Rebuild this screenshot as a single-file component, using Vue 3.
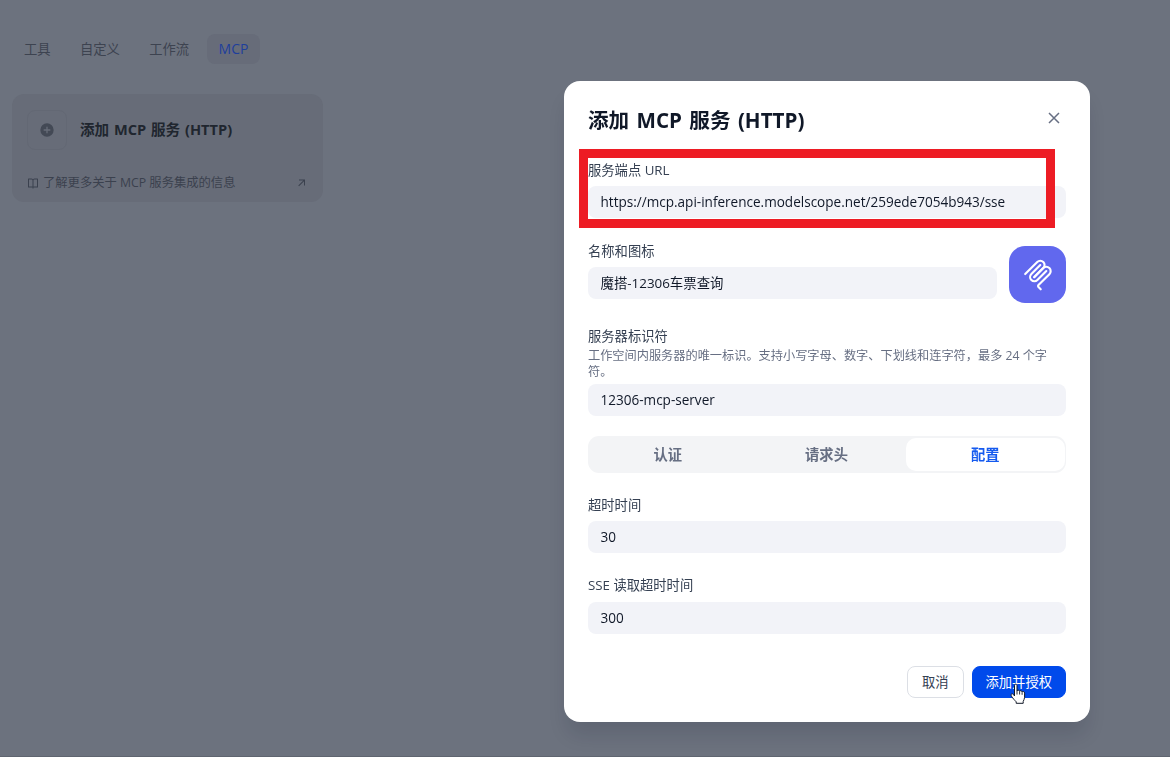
<template>
  <div class="page">
    <nav class="nav">
      <span v-for="item in navItems" :key="item" class="nav-item" :class="{ active: item === 'MCP' }">{{ item }}</span>
    </nav>

    <div class="card">
      <div class="card-head">
        <div class="card-icon">
          <svg viewBox="0 0 24 24" width="16" height="16">
            <path fill="currentColor" fill-rule="evenodd" d="M12 2a10 10 0 1 0 0 20 10 10 0 0 0 0-20Zm-1 9V7h2v4h4v2h-4v4h-2v-4H7v-2h4Z" />
          </svg>
        </div>
        <h3 class="card-title">添加 MCP 服务 (HTTP)</h3>
      </div>
      <div class="card-foot">
        <svg viewBox="0 0 24 24" width="12" height="12">
          <path fill="currentColor" d="M13 21v2h-2v-2H3a1 1 0 0 1-1-1V4a1 1 0 0 1 1-1h6c1.200 0 2.270.530 3 1.360A4 4 0 0 1 15 3h6a1 1 0 0 1 1 1v16a1 1 0 0 1-1 1h-8Zm7-2V5h-5a2 2 0 0 0-2 2v12h7Zm-9 0V7a2 2 0 0 0-2-2H4v14h7Z" />
        </svg>
        <span class="card-link">了解更多关于 MCP 服务集成的信息</span>
        <svg class="arrow" viewBox="0 0 24 24" width="12" height="12">
          <path fill="currentColor" d="M16 8.400 6 18.400 4.600 17 14.600 7H6V5h12v12h-2V8.400Z" />
        </svg>
      </div>
    </div>
  </div>

  <div class="overlay">
    <div class="modal">
      <header class="modal-header">
        <h2 class="modal-title">添加 MCP 服务 (HTTP)</h2>
        <button class="close-btn">
          <svg viewBox="0 0 12 12" width="12" height="12">
            <path d="M1 1l10 10M11 1L1 11" fill="none" stroke="currentColor" stroke-width="1.500" />
          </svg>
        </button>
      </header>

      <div class="field">
        <label class="label">服务端点 URL</label>
        <input v-model="form.url" class="input" />
      </div>

      <div class="name-row">
        <div class="field">
          <label class="label">名称和图标</label>
          <input v-model="form.name" class="input name" />
        </div>
        <div class="app-icon">
          <svg viewBox="0 0 180 180" width="32" height="32" fill="none" stroke="#fff" stroke-width="12" stroke-linecap="round">
            <path d="M18 84.853L85.882 16.971C95.255 7.598 110.451 7.598 119.823 16.971C129.196 26.343 129.196 41.539 119.823 50.912L68.558 102.177" />
            <path d="M69.265 101.470L119.823 50.912C129.196 41.539 144.392 41.539 153.765 50.912L154.118 51.265C163.491 60.638 163.491 75.834 154.118 85.206L92.725 146.600C89.601 149.724 89.601 154.789 92.725 157.913L105.331 170.520" />
            <path d="M102.853 33.941L52.648 84.146C43.276 93.518 43.276 108.714 52.648 118.087C62.021 127.459 77.217 127.459 86.589 118.087L136.794 67.882" />
          </svg>
        </div>
      </div>

      <div class="field server">
        <label class="label">服务器标识符</label>
        <p class="hint">工作空间内服务器的唯一标识。支持小写字母、数字、下划线和连字符，最多 24 个字符。</p>
        <input v-model="form.server" class="input" />
      </div>

      <div class="tabs">
        <button v-for="t in tabs" :key="t" class="tab" :class="{ active: t === tab }" @click="tab = t">{{ t }}</button>
      </div>

      <div class="field timeout">
        <label class="label">超时时间</label>
        <input v-model="form.timeout" class="input" />
      </div>

      <div class="field read-timeout">
        <label class="label">SSE 读取超时时间</label>
        <input v-model="form.readTimeout" class="input" />
      </div>

      <footer class="modal-footer">
        <button class="btn">取消</button>
        <button class="btn primary">添加并授权</button>
      </footer>

      <div class="highlight"></div>
      <svg class="cursor" viewBox="0 0 18 22" width="18" height="22">
        <path d="M5.500 13V2.700C5.500 .6 8 .6 8 2.700V8c.3-1.200 2.400-1.100 2.600.3.500-1 2.200-.8 2.500.6.700-.8 2.500-.4 2.500 1.200v4.200c0 1.700-.9 2.600-1.400 4.200v1.800H7.200v-1.500C5.600 17.200 4 15.600 2.500 13.200 1.400 11.300 3 10 4.300 11.300Z" fill="#fff" stroke="#111827" stroke-width="1" stroke-linejoin="round" />
        <path d="M8 8v3.500M10.600 8.500v3M13.100 9.200v2.600" fill="none" stroke="#111827" stroke-width=".9" />
      </svg>
    </div>
  </div>
</template>

<script setup>
import { reactive, ref } from 'vue';

const navItems = ['工具', '自定义', '工作流', 'MCP'];
const tabs = ['认证', '请求头', '配置'];
const tab = ref('配置');

const form = reactive({
  url: 'https://mcp.api-inference.modelscope.net/259ede7054b943/sse',
  name: '魔搭-12306车票查询',
  server: '12306-mcp-server',
  timeout: '30',
  readTimeout: '300',
});
</script>

<style>
body {
  background: #6c727e;
  font-family: "Open Sans", "Noto Sans CJK SC", sans-serif;
}
</style>

<style scoped>
* { box-sizing: border-box; }
h2, h3, p { margin: 0; }
button, input { font-family: inherit; border: none; outline: none; padding: 0; }

.page {
  height: 757px;
  padding: 34px 12px 0;
  border-bottom: 1px solid #5f6570;
  overflow: hidden;
}

.nav { display: flex; gap: 5.4px; }
.nav-item {
  height: 30px;
  padding: 0 12px;
  border-radius: 8px;
  font-size: 13.3px;
  line-height: 30px;
  color: #3d4350;
}
.nav-item.active { background: #676c79; color: #1f3f9c; font-size: 14px; }

.card {
  width: 311px;
  height: 108px;
  margin-top: 30px;
  border-radius: 12px;
  background: #676c78;
}
.card-head { display: flex; align-items: center; padding: 16px 15px 0; }
.card-icon {
  width: 40px;
  height: 40px;
  display: flex;
  align-items: center;
  justify-content: center;
  border: 1px solid #636874;
  border-radius: 8px;
  color: #434955;
}
.card-title {
  margin: 0 0 2px 13px;
  font-size: 14.6px;
  line-height: 24px;
  word-spacing: 1px;
  color: #20262f;
}
.card-foot {
  display: flex;
  align-items: center;
  margin-top: 24px;
  padding: 0 15px;
  color: #3b414e;
}
.card-link { margin-left: 4px; font-size: 12.3px; line-height: 18px; }
.arrow { margin-left: auto; }

.overlay {
  position: fixed;
  inset: 0;
  display: flex;
  align-items: flex-start;
  justify-content: flex-end;
  padding: 81px 80px 0 0;
}
.modal {
  position: relative;
  width: 526px;
  height: 641px;
  padding: 24px;
  border-radius: 16px;
  background: #fff;
  box-shadow: 0 16px 20px -4px rgba(16, 24, 40, 0.14);
}
.modal-header { display: flex; justify-content: space-between; height: 55px; }
.modal-title { font-size: 20.6px; line-height: 30px; word-spacing: 2px; color: #101828; }
.close-btn { width: 24px; height: 26px; background: none; color: #676f83; line-height: 0; }

.field { display: flex; flex-direction: column; }
.label { margin-bottom: 6px; font-size: 13.3px; line-height: 20px; color: #354052; }
.input {
  height: 32px;
  padding: 0 12.5px 1px;
  border-radius: 8px;
  background: #f2f3f8;
  font-size: 13.55px;
  color: #101828;
}
.input.name { padding-bottom: 3px; font-size: 13.4px; }

.name-row { display: flex; gap: 12px; margin-top: 23px; }
.name-row .field { flex: 1; }
.app-icon {
  width: 57px;
  height: 57px;
  margin-top: 5px;
  display: flex;
  align-items: center;
  justify-content: center;
  border-radius: 16px;
  background: #6168ee;
}

.server { margin-top: 23px; }
.server .label { margin-bottom: 2px; }
.hint { margin-bottom: 4px; font-size: 12.2px; line-height: 16px; color: #676f83; }

.tabs {
  display: flex;
  height: 37px;
  margin-top: 20px;
  padding: 2px 1px;
  border-radius: 11px;
  background: #f3f4f6;
}
.tab {
  flex: 1;
  padding: 0 1px 2px 0;
  border-radius: 10px;
  background: none;
  font-size: 14.3px;
  font-weight: 700;
  color: #676f83;
}
.tab.active { background: #fff; color: #155aef; }

.timeout { margin-top: 22px; }
.read-timeout { margin-top: 23px; }
.read-timeout .label { line-height: 18px; margin-bottom: 8px; }

.modal-footer { display: flex; justify-content: flex-end; gap: 8px; margin-top: 32px; }
.btn {
  height: 32px;
  padding: 0 14px 2px;
  border: 1px solid #dcdfe5;
  border-radius: 8px;
  background: #fff;
  font-size: 13.3px;
  color: #354052;
}
.btn.primary { padding: 0 13px 2px; border-color: #004aeb; background: #004aeb; color: #fff; }

/* red frame drawn over the endpoint field */
.highlight {
  position: absolute;
  left: 15px;
  top: 68px;
  width: 476px;
  height: 79px;
  border: 9px solid #ed1c24;
}
.cursor { position: absolute; left: 445px; top: 602px; }
</style>
